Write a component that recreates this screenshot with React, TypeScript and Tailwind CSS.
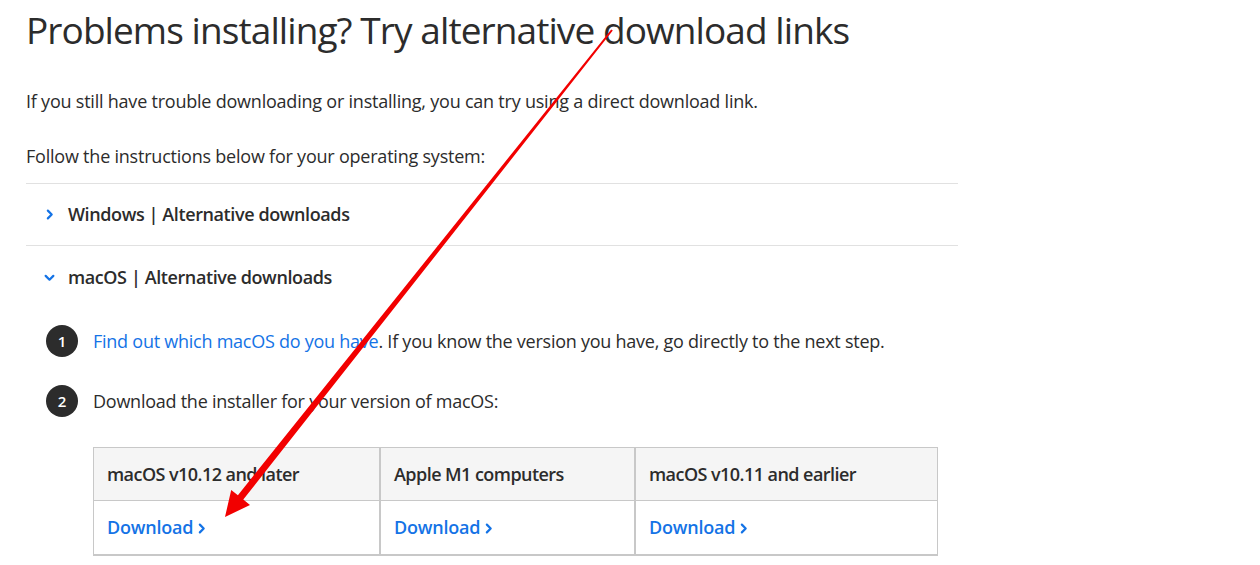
import React from 'react';

const font = { fontFamily: '"Open Sans", "Noto Sans", sans-serif' };

function ChevronRight({ className }: { className?: string }) {
  return (
    <svg className={className} viewBox="0 0 10 10" fill="none" stroke="currentColor" strokeWidth={2} strokeLinecap="round" strokeLinejoin="round">
      <path d="M3.5 1.5 7 5l-3.5 3.5" />
    </svg>
  );
}

function ChevronDown({ className }: { className?: string }) {
  return (
    <svg className={className} viewBox="0 0 10 10" fill="none" stroke="currentColor" strokeWidth={2} strokeLinecap="round" strokeLinejoin="round">
      <path d="M1.5 3.5 5 7l3.5-3.5" />
    </svg>
  );
}

function Step({ n, children }: { n: number; children: React.ReactNode }) {
  return (
    <div className="flex items-center gap-[15px]">
      <div className="w-[32px] h-[32px] rounded-full bg-[#2c2c2c] text-white text-[15px] font-semibold flex items-center justify-center shrink-0">
        {n}
      </div>
      <div className="text-[18px] tracking-[-0.25px] text-[#2c2c2c]">{children}</div>
    </div>
  );
}

const columns = ['macOS v10.12 and later', 'Apple M1 computers', 'macOS v10.11 and earlier'];
const widths = ['w-[285px]', 'w-[255px]', 'w-[303px]'];

function DownloadLink() {
  return (
    <a className="inline-flex items-center gap-[3px] text-[#1473e6] text-[18px] font-semibold tracking-[-0.2px]" href="#">
      Download
      <ChevronRight className="w-[11px] h-[11px] mt-[2px]" />
    </a>
  );
}

export default function App() {
  return (
    <div className="relative w-[1260px] h-[565px] bg-white overflow-hidden text-[#2c2c2c]" style={font}>
      <div className="pl-[26px] w-[958px]">
        <h1 className="text-[37px] leading-[60px] font-normal tracking-[-0.92px]">
          Problems installing? Try alternative download links
        </h1>
        <p className="text-[18px] tracking-[-0.22px] mt-[27px] leading-[28px]">
          If you still have trouble downloading or installing, you can try using a direct download link.
        </p>
        <p className="text-[18px] tracking-[-0.22px] mt-[27px] leading-[28px]">Follow the instructions below for your operating system:</p>

        <div className="mt-[13px] border-t border-[#e1e1e1]">
          <div className="h-[62px] flex items-center gap-[13px] pl-[18px] border-b border-[#e1e1e1]">
            <ChevronRight className="w-[11px] h-[11px] text-[#1473e6]" />
            <span className="text-[18px] font-semibold tracking-[-0.4px]">Windows | Alternative downloads</span>
          </div>
          <div className="h-[62px] flex items-center gap-[13px] pl-[18px]">
            <ChevronDown className="w-[11px] h-[11px] text-[#1473e6]" />
            <span className="text-[18px] font-semibold tracking-[-0.4px]">macOS | Alternative downloads</span>
          </div>
        </div>

        <div className="pl-[20px] mt-[17px] flex flex-col gap-[28px]">
          <Step n={1}>
            <a href="#" className="text-[#1473e6]">Find out which macOS do you have</a>. If you know the version you have, go directly to the next step.
          </Step>
          <Step n={2}>Download the installer for your version of macOS:</Step>
        </div>

        <div className="ml-[67px] mt-[30px] flex w-fit border border-[#c8c8c8] border-b-2">
          {columns.map((c, i) => (
            <div key={c} className={`${widths[i]} flex flex-col ${i > 0 ? 'border-l-2 border-[#c8c8c8]' : ''}`}>
              <div className="h-[53px] bg-[#f5f5f5] border-b border-[#c8c8c8] flex items-center px-[13px] text-[18px] font-semibold tracking-[-0.55px]">
                {c}
              </div>
              <div className="h-[53px] flex items-center px-[13px]">
                <DownloadLink />
              </div>
            </div>
          ))}
        </div>
      </div>

      <svg className="absolute inset-0 pointer-events-none" width="1260" height="565" viewBox="0 0 1260 565">
        <polygon
          points="611.2,29.4 612.8,30.6 243.3,499.6 250,505 225,517 231.2,490 237.9,495.2"
          fill="#f20000"
        />
      </svg>
    </div>
  );
}
